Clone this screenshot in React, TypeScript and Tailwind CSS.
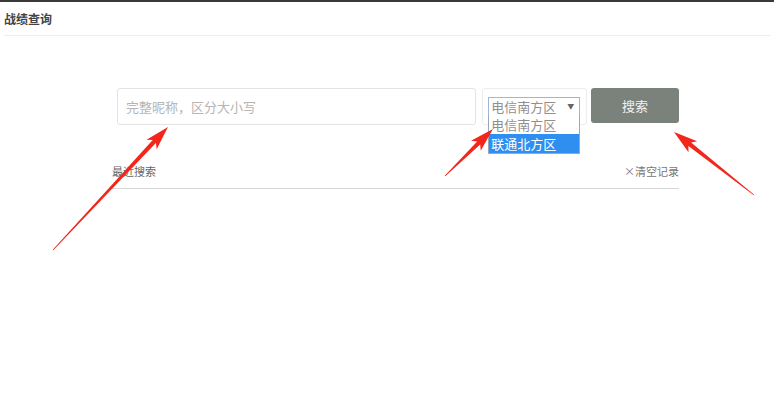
const arrows = [
  { x1: 53, y1: 248, x2: 168, y2: 125 },
  { x1: 445, y1: 174, x2: 493, y2: 127 },
  { x1: 754, y1: 193, x2: 674, y2: 130 },
];

const arrowPoints = (a: { x1: number; y1: number; x2: number; y2: number }) => {
  const dx = a.x2 - a.x1;
  const dy = a.y2 - a.y1;
  const len = Math.hypot(dx, dy);
  const ux = dx / len;
  const uy = dy / len;
  const nx = -uy;
  const ny = ux;
  const head = 20;
  const bx = a.x2 - ux * head;
  const by = a.y2 - uy * head;
  const wx = a.x2 - ux * (head + 4);
  const wy = a.y2 - uy * (head + 4);
  const pts = [
    [a.x1 + nx * 0.4, a.y1 + ny * 0.4],
    [bx + nx * 2.2, by + ny * 2.2],
    [wx + nx * 7, wy + ny * 7],
    [a.x2, a.y2],
    [wx - nx * 7, wy - ny * 7],
    [bx - nx * 2.2, by - ny * 2.2],
    [a.x1 - nx * 0.4, a.y1 - ny * 0.4],
  ];
  return pts.map((p) => `${p[0].toFixed(1)},${p[1].toFixed(1)}`).join(" ");
};

const App = () => {
  return (
    <div
      className="relative h-[409px] w-[774px] overflow-hidden border-t-2 border-[#3a3a3a] bg-white"
      style={{ fontFamily: '"Microsoft YaHei", "Noto Sans CJK SC", sans-serif' }}
    >
      <div className="mx-[4px] border-b border-[#ececec] pt-[9px] pb-[8px]">
        <h1 className="text-[12px] font-bold leading-[16px] text-[#444]">战绩查询</h1>
      </div>

      <div className="ml-[112px] w-[567px] pt-[52px]">
        <div className="flex items-start pl-[5px]">
          <div className="flex h-[37px] w-[360px] items-center rounded-[3px] border border-[#e3e3e3] px-[8px] text-[13px] text-[#b5b5b5]">
            完整昵称，区分大小写
          </div>
          <div className="relative ml-[6px] flex h-[37px] w-[105px] items-center rounded-[3px] border border-[#ececec] pl-[5px]">
            <div className="flex h-[20px] w-[92px] items-center justify-between border border-[#9fb6d8] pl-[2px] pr-[5px] text-[13px] leading-none text-[#8f8f8f]">
              <span>电信南方区</span>
              <span className="text-[7px] text-[#666]">▼</span>
            </div>
            <div className="absolute top-[26px] left-[5px] w-[92px] border border-[#9aa8bb] border-t-0 bg-white text-[13px] leading-[19px]">
              <div className="pl-[2px] text-[#8f8f8f]">电信南方区</div>
              <div className="bg-[#2f8ff0] pl-[2px] text-white">联通北方区</div>
            </div>
          </div>
          <button className="ml-[4px] h-[35px] w-[88px] rounded-[3px] bg-[#7b827b] text-[13px] text-[#f2f2f2]">
            搜索
          </button>
        </div>

        <div className="mt-[38px] flex items-center justify-between border-b border-[#d6d6d6] pb-[9px] text-[11px] leading-[16px] text-[#666]">
          <span>最近搜索</span>
          <span className="text-[#777]">×清空记录</span>
        </div>
      </div>

      <svg className="pointer-events-none absolute inset-0" width={774} height={409}>
        {arrows.map((a, i) => (
          <polygon key={i} points={arrowPoints(a)} fill="#f2261b" />
        ))}
      </svg>
    </div>
  );
};

export default App;
